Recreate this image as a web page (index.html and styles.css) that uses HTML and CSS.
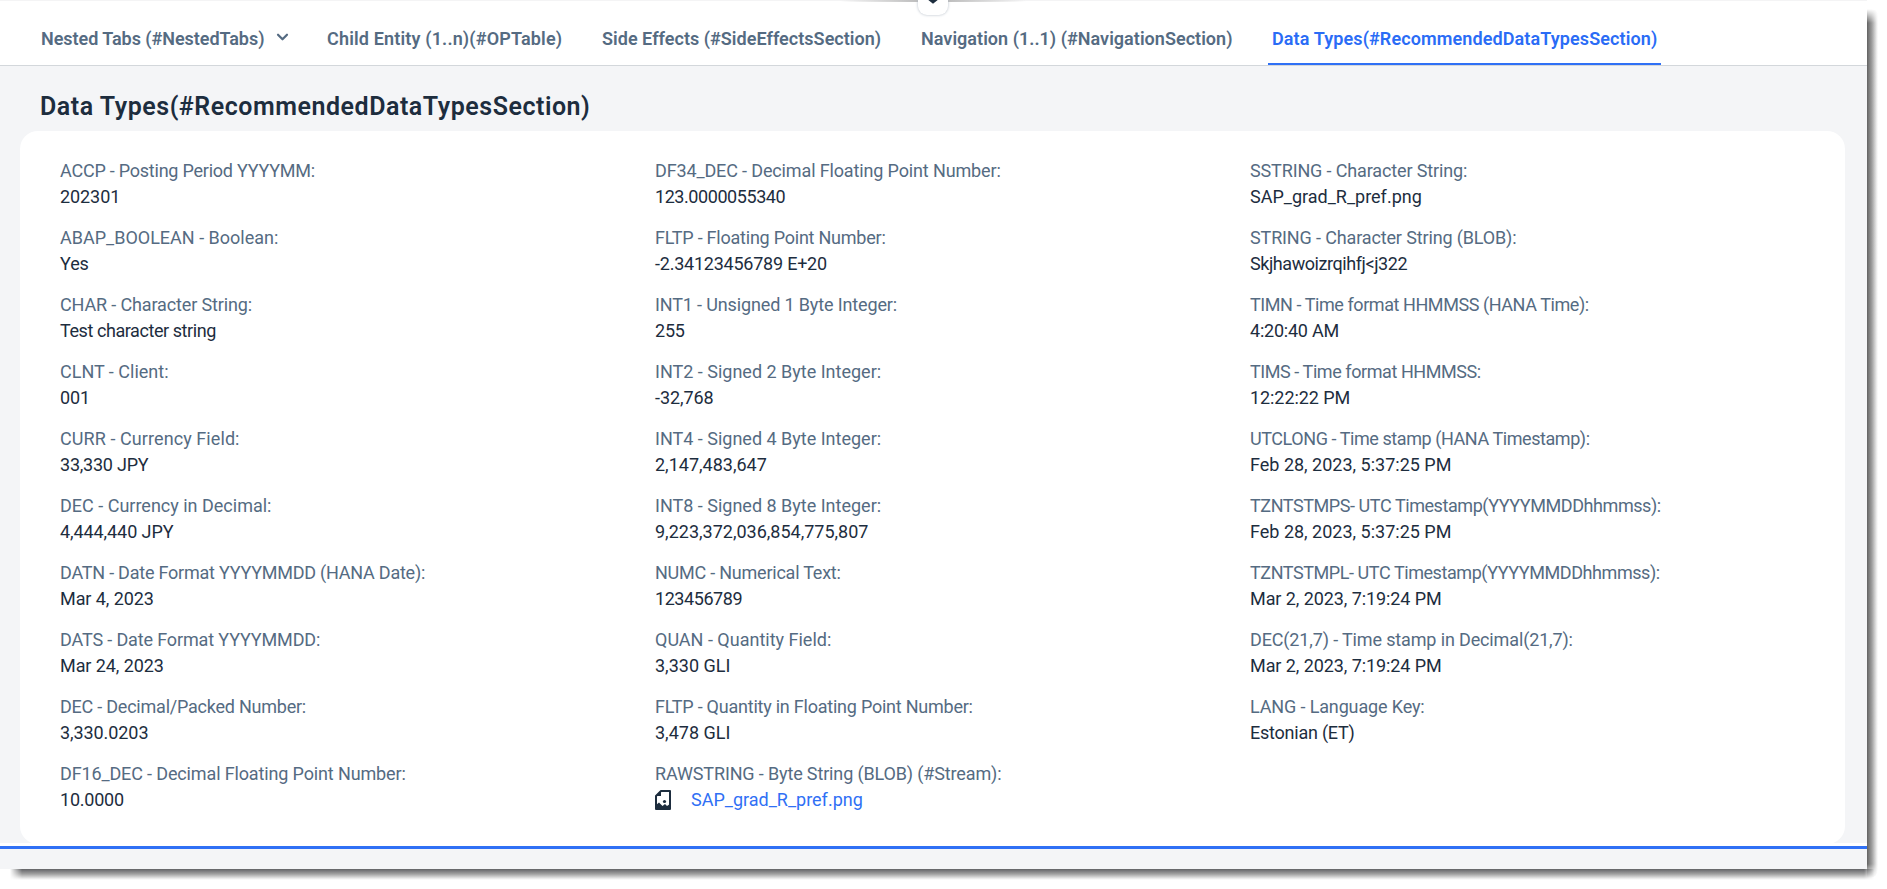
FILE: index.html
```html
<!DOCTYPE html>
<html lang="en">
<head>
<meta charset="utf-8">
<title>Data Types</title>
<link rel="stylesheet" href="styles.css">
</head>
<body>
<div class="shade shade-right"></div>
<div class="shade shade-bottom"></div>
<div class="page">
  <div class="top-glow"></div>
  <div class="collapse"><svg width="12" height="8" viewBox="0 0 12 8"><path d="M1.5-1.5 6 2 10.500-1.500" fill="none" stroke="#1d2d3e" stroke-width="2.6"/></svg></div>
  <nav class="tabs">
    <div class="tab t1"><span>Nested Tabs (#NestedTabs)</span><svg class="chev" width="13" height="9" viewBox="0 0 13 9"><path d="M2 1.700 6.500 6.300 11 1.700" fill="none" stroke="#556b82" stroke-width="2.2" stroke-linecap="round" stroke-linejoin="round"/></svg></div>
    <div class="tab t2"><span>Child Entity (1..n)(#OPTable)</span></div>
    <div class="tab t3"><span>Side Effects (#SideEffectsSection)</span></div>
    <div class="tab t4"><span>Navigation (1..1) (#NavigationSection)</span></div>
    <div class="tab t5 active"><span>Data Types(#RecommendedDataTypesSection)</span></div>
  </nav>
  <main class="content">
    <h1 class="title"><span>Data Types(#RecommendedDataTypesSection)</span></h1>
    <section class="card">
      <dl class="col">
        <dt class="snug">ACCP - Posting Period YYYYMM:</dt><dd>202301</dd>
        <dt class="even">ABAP_BOOLEAN - Boolean:</dt><dd>Yes</dd>
        <dt>CHAR - Character String:</dt><dd class="tight">Test character string</dd>
        <dt class="even">CLNT - Client:</dt><dd>001</dd>
        <dt class="loose">CURR - Currency Field:</dt><dd class="snug">33,330 JPY</dd>
        <dt class="even">DEC - Currency in Decimal:</dt><dd>4,444,440 JPY</dd>
        <dt class="snug">DATN - Date Format YYYYMMDD (HANA Date):</dt><dd>Mar 4, 2023</dd>
        <dt>DATS - Date Format YYYYMMDD:</dt><dd>Mar 24, 2023</dd>
        <dt class="snug">DEC - Decimal/Packed Number:</dt><dd>3,330.0203</dd>
        <dt>DF16_DEC - Decimal Floating Point Number:</dt><dd class="snug">10.0000</dd>
      </dl>
      <dl class="col">
        <dt>DF34_DEC - Decimal Floating Point Number:</dt><dd class="tight">123.0000055340</dd>
        <dt class="snug">FLTP - Floating Point Number:</dt><dd class="snug">-2.34123456789 E+20</dd>
        <dt>INT1 - Unsigned 1 Byte Integer:</dt><dd class="snug">255</dd>
        <dt class="even">INT2 - Signed 2 Byte Integer:</dt><dd>-32,768</dd>
        <dt class="even">INT4 - Signed 4 Byte Integer:</dt><dd class="even">2,147,483,647</dd>
        <dt class="even">INT8 - Signed 8 Byte Integer:</dt><dd class="even">9,223,372,036,854,775,807</dd>
        <dt class="snug">NUMC - Numerical Text:</dt><dd class="tight">123456789</dd>
        <dt class="even">QUAN - Quantity Field:</dt><dd class="even">3,330 GLI</dd>
        <dt class="snug">FLTP - Quantity in Floating Point Number:</dt><dd class="even">3,478 GLI</dd>
        <dt>RAWSTRING - Byte String (BLOB) (#Stream):</dt>
        <dd class="file even"><svg width="17" height="20" viewBox="0 0 17 20"><path d="M6 1H15V19H1V6Z" fill="#fff" stroke="#1d2d3e" stroke-width="2" stroke-linejoin="round"/><path d="M1 6 6 1V6Z" fill="#1d2d3e"/><path d="M1 19V15L4 12.500 7.500 16 10 14 12 16 15 14V19Z" fill="#1d2d3e"/><circle cx="9.500" cy="11.500" r="1.600" fill="#1d2d3e"/></svg><a class="link">SAP_grad_R_pref.png</a></dd>
      </dl>
      <dl class="col">
        <dt>SSTRING - Character String:</dt><dd class="even">SAP_grad_R_pref.png</dd>
        <dt>STRING - Character String (BLOB):</dt><dd class="tight">Skjhawoizrqihfj&lt;j322</dd>
        <dt class="tight">TIMN - Time format HHMMSS (HANA Time):</dt><dd class="snug">4:20:40 AM</dd>
        <dt class="tight">TIMS - Time format HHMMSS:</dt><dd>12:22:22 PM</dd>
        <dt class="tight">UTCLONG - Time stamp (HANA Timestamp):</dt><dd class="even">Feb 28, 2023, 5:37:25 PM</dd>
        <dt class="tight">TZNTSTMPS- UTC Timestamp(YYYYMMDDhhmmss):</dt><dd class="even">Feb 28, 2023, 5:37:25 PM</dd>
        <dt class="tight">TZNTSTMPL- UTC Timestamp(YYYYMMDDhhmmss):</dt><dd>Mar 2, 2023, 7:19:24 PM</dd>
        <dt>DEC(21,7) - Time stamp in Decimal(21,7):</dt><dd>Mar 2, 2023, 7:19:24 PM</dd>
        <dt>LANG - Language Key:</dt><dd class="snug">Estonian (ET)</dd>
      </dl>
    </section>
  </main>
  <footer class="footer"></footer>
</div>
</body>
</html>
```
FILE: styles.css
```css
* { box-sizing: border-box; }
body { margin: 0; height: 889px; overflow: hidden; position: relative; background: #fff; font-family: Roboto, "Liberation Sans", sans-serif; font-size: 18px; color: #1d2d3e; }
.page { position: relative; width: 1867px; height: 869px; background: #f4f5f7; display: flex; flex-direction: column; }
.shade { position: absolute; }
.shade-right { left: 1867px; top: 9px; width: 11px; height: 869px; background: linear-gradient(90deg, #626262, #a0a0a0 45%, #e9e9e9 85%, #fff); -webkit-mask-image: linear-gradient(180deg, transparent, #000 14px, #000 855px, transparent); border-radius: 0 6px 8px 0; }
.shade-bottom { left: 10px; top: 869px; width: 1864px; height: 11px; background: linear-gradient(180deg, #626366, #a0a0a0 45%, #e9e9e9 85%, #fff); -webkit-mask-image: linear-gradient(90deg, transparent, #000 12px, #000 1854px, transparent); }
.top-glow { position: absolute; left: 840px; top: 0; width: 186px; height: 2px; background: linear-gradient(90deg, transparent, #b9b9b9 45%, #b9b9b9 55%, transparent); }
.collapse { position: absolute; left: 918px; top: -15px; width: 30px; height: 30px; padding: 15px 9px 0; border-radius: 9px; background: #fff; box-shadow: 0 0 3px #b4bcc6; line-height: 0; }
.tabs { flex: none; height: 66px; display: flex; background: #fff; border-top: 1px solid #f4f4f5; border-bottom: 1px solid #d3d7db; padding-left: 37px; }
.tab { height: 64px; padding: 14px 4px 0; display: flex; align-items: center; line-height: 26px; font-weight: 600; color: #556b82; white-space: nowrap; border-bottom: 2px solid transparent; }
.t1 { width: 286px; letter-spacing: -0.05px; }
.t2 { width: 275px; letter-spacing: 0.16px; }
.t3 { width: 319px; letter-spacing: 0.03px; }
.t4 { width: 351px; letter-spacing: 0.03px; }
.t5 { width: 393px; letter-spacing: 0.11px; }
.chev { margin: -3px 0 0 12px; }
.active { color: #2a6cf6; border-bottom-color: #2f70f5; }
.content { flex: 1; padding: 24px 22px 0 20px; }
.title { margin: 0; height: 41px; padding-left: 20px; font-size: 25px; line-height: 34px; font-weight: 600; letter-spacing: 0.53px; white-space: nowrap; }
.card { height: 713px; background: #fff; border-radius: 18px; display: grid; grid-template-columns: 595px 595px 1fr; padding: 27px 0 0 40px; }
.col { margin: 0; white-space: nowrap; }
dt { line-height: 26px; color: #556b82; letter-spacing: -0.14px; }
dd { margin: 0 0 15px; line-height: 26px; height: 26px; letter-spacing: -0.08px; }
.loose { letter-spacing: 0.08px; }
.even { letter-spacing: 0; }
.snug { letter-spacing: -0.23px; }
.tight { letter-spacing: -0.43px; }
.file { display: flex; align-items: center; }
.link { margin-left: 19px; color: #2f70f5; }
.footer { position: relative; flex: none; height: 23px; border-top: 3px solid #2f70f5; background: #f4f5f7; box-shadow: 0 -3px 0 #fff; }
```
